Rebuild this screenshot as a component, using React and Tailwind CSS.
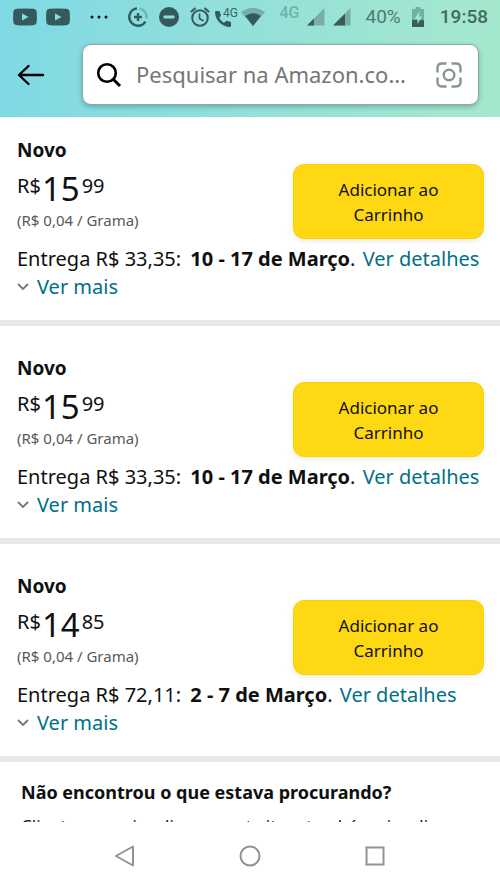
const offers = [
  { id: 1, whole: '15', cents: '99', unit: '(R$ 0,04 / Grama)', shipping: 'R$ 33,35', date: '10 - 17 de Março' },
  { id: 2, whole: '15', cents: '99', unit: '(R$ 0,04 / Grama)', shipping: 'R$ 33,35', date: '10 - 17 de Março' },
  { id: 3, whole: '14', cents: '85', unit: '(R$ 0,04 / Grama)', shipping: 'R$ 72,11', date: '2 - 7 de Março' },
];

function VideoIcon() {
  return (
    <svg className="h-[18px] w-6" viewBox="0 0 24 18">
      <path fill="#345a5e" d="M4 .8Q12 0 20 .8q3.500.3 3.700 3.400.4 4.800 0 9.600-.2 3.100-3.700 3.400-8 .8-16 0-3.500-.3-3.700-3.400-.4-4.800 0-9.600Q.5 1.100 4 .8Z" />
      <path fill="#8adbe0" d="M9 5.500v7l6.500-3.500Z" />
    </svg>
  );
}

function SignalIcon({ level }) {
  return (
    <svg className="h-[18px] w-[18px]" viewBox="0 0 18 18">
      <path fill="#78aea7" d="M0 17.500 17.500 0v17.500Z" />
      <path fill="#3b5d57" d={`M0 17.500 L${level} ${17.5 - level} V17.500Z`} />
    </svg>
  );
}

function StatusBar() {
  return (
    <div className="flex h-[34px] items-center justify-between pl-[13px] pr-3 font-[Roboto,sans-serif] text-[#3e6660]">
      <div className="flex items-center">
        <VideoIcon />
        <span className="w-[9px]" />
        <VideoIcon />
        <svg className="ml-5 h-1 w-[18px]" viewBox="0 0 18 4" fill="#0b1414">
          <circle cx="2" cy="2" r="1.500" />
          <circle cx="9" cy="2" r="1.500" />
          <circle cx="16" cy="2" r="1.500" />
        </svg>
        <svg className="ml-5 h-5 w-5" viewBox="0 0 20 20" fill="none" strokeWidth="2.400">
          <path stroke="#6fb3b3" d="M11.500 1.500a8.700 8.700 0 0 1 7 10" />
          <path stroke="#345a5e" d="M9 1.400a8.700 8.700 0 1 0 8.400 13.200" />
          <path stroke="#345a5e" d="M10 6v8M6 10h8" />
        </svg>
        <svg className="ml-[11px] h-5 w-5" viewBox="0 0 20 20">
          <circle cx="10" cy="10" r="10" fill="#345a5e" />
          <rect x="4.500" y="8.600" width="11" height="2.800" rx="1" fill="#8fdfdc" />
        </svg>
        <svg className="ml-[11px] h-5 w-5" viewBox="0 0 20 20" fill="none" stroke="#345a5e" strokeWidth="2">
          <circle cx="10" cy="11" r="7.800" />
          <path d="M9.500 6.500v5l4 2.500" strokeWidth="1.600" />
          <path d="M.8 5 5.500 1M19.200 5 14.500 1" />
        </svg>
        <div className="relative ml-[5px] h-5 w-[22px]">
          <svg className="h-5 w-5" viewBox="0 0 20 20">
            <path fill="#345a5e" d="M1 4h3.500l1.500 4.500L4.300 11c1.300 2.300 2.500 3.500 4.700 4.700l2.300-2 4.700 1.300V19q0 1-1 1C7 20 0 13 0 5q0-1 1-1Z" />
          </svg>
          <span className="absolute left-2 top-0 text-[12px] leading-[12px]">4G</span>
        </div>
        <svg className="ml-1 h-[18px] w-6" viewBox="0 0 24 18">
          <path fill="#74aeab" d="M0 4Q12-4.500 24 4L12 18Z" />
          <path fill="#345a5e" d="M4.200 8Q12 2.500 19.800 8L12 18Z" />
        </svg>
      </div>
      <div className="flex items-center">
        <span className="mb-2 text-[16px] font-medium leading-4 text-[#6cb3a9]">4G</span>
        <span className="w-[7px]" />
        <SignalIcon level={7} />
        <span className="w-2" />
        <SignalIcon level={12} />
        <span className="ml-[15px] text-[19px] text-[#4d7a71]">40%</span>
        <svg className="ml-[11px] h-5 w-3" viewBox="0 0 12 20">
          <path fill="#74aea1" d="M3.500 0h5v2H12v18H0V2h3.500Z" />
          <path fill="#3b5d57" d="M0 13h12v7H0Z" />
          <path fill="#a1e5d1" d="M7.500 4 2.500 12h3v5l4.500-7.500H7Z" />
        </svg>
        <span className="ml-4 text-[19px] font-medium text-[#44695f]">19:58</span>
      </div>
    </div>
  );
}

function SearchHeader() {
  return (
    <header className="bg-linear-to-r from-[#7fd9e4] to-[#a6e8cd]">
      <StatusBar />
      <div className="flex items-center pb-3 pl-[17px] pr-[21px] pt-[10px]">
        <button type="button" aria-label="Voltar">
          <svg className="h-6 w-7" viewBox="0 0 28 24" fill="none" stroke="#000" strokeWidth="2.400" strokeLinecap="round" strokeLinejoin="round">
            <path d="M26 12H2M11.500 3l-9.500 9 9.500 9" />
          </svg>
        </button>
        <label className="ml-[37px] flex h-[61px] min-w-0 flex-1 items-center rounded-[9px] border border-[#8fa9ab] bg-white pl-[13px] pr-4 shadow-[0_2px_5px_rgba(0,60,60,0.3)]">
          <svg className="h-[26px] w-[26px] shrink-0" viewBox="0 0 26 26" fill="none" stroke="#000" strokeWidth="2.600">
            <circle cx="11" cy="11" r="8.800" />
            <path d="m17.500 17.500 6.500 6.500" strokeWidth="3" />
          </svg>
          <input
            type="text"
            aria-label="Pesquisar"
            placeholder="Pesquisar na Amazon.co…"
            className="ml-[14px] min-w-0 flex-1 bg-transparent text-[22px] outline-none placeholder:text-[#767676]"
          />
          <svg className="h-[26px] w-[26px] shrink-0" viewBox="0 0 26 26" fill="none" stroke="#879596" strokeWidth="2.400">
            <path d="M1.500 10.500V6q0-4.500 4.500-4.500h4.500M15.500 1.500H20q4.500 0 4.500 4.500v4.500M24.500 15.500V20q0 4.500-4.500 4.500h-4.500M10.500 24.500H6q-4.500 0-4.500-4.500v-4.500" />
            <circle cx="13" cy="13" r="5.300" />
          </svg>
        </label>
      </div>
    </header>
  );
}

function Offer({ offer }) {
  return (
    <section className="border-b-[6px] border-[#e7e7e7] pb-[19px] pl-[17px] pr-4 pt-7 first:pt-[19px]">
      <div className="flex items-start justify-between">
        <div>
          <h2 className="text-[19px] font-bold leading-7">Novo</h2>
          <p className="mt-1 flex items-start">
            <span className="mr-px pt-1 text-[20px] leading-7">R$</span>
            <span className="mr-0.5 text-[33px] leading-[42px]">{offer.whole}</span>
            <span className="pt-1 text-[20px] leading-7">{offer.cents}</span>
          </p>
          <p className="text-[15px] leading-5 text-[#565959]">{offer.unit}</p>
        </div>
        <button
          type="button"
          className="mt-7 h-[75px] w-[191px] rounded-[11px] border border-[#fcd200] bg-[#ffd814] px-8 text-[17px] leading-[25px] shadow-[0_2px_5px_rgba(213,217,217,0.5)]"
        >
          Adicionar ao Carrinho
        </button>
      </div>
      <p className="mt-1.5 text-[20px] leading-7">
        Entrega {offer.shipping}: <b className="ml-1">{offer.date}</b>.{' '}
        <a href="#detalhes" className="ml-0.5 text-[#007185]">Ver detalhes</a>
      </p>
      <button type="button" className="flex items-center text-[20px] leading-7 text-[#007185]">
        <svg className="mr-2 h-2 w-3" viewBox="0 0 12 8" fill="none" stroke="#767676" strokeWidth="1.800">
          <path d="m1 1 5 5 5-5" />
        </svg>
        Ver mais
      </button>
    </section>
  );
}

function NavBar() {
  return (
    <nav className="flex h-[67px] shrink-0 items-center justify-center gap-[103px] bg-white">
      <button type="button" aria-label="Voltar">
        <svg className="h-[22px] w-[22px]" viewBox="0 0 22 22" fill="none" stroke="#929292" strokeWidth="2" strokeLinejoin="round">
          <path d="M19 1.500v19L2 11Z" />
        </svg>
      </button>
      <button type="button" aria-label="Início">
        <svg className="h-[22px] w-[22px]" viewBox="0 0 22 22" fill="none" stroke="#929292" strokeWidth="2">
          <circle cx="11" cy="11" r="9.500" />
        </svg>
      </button>
      <button type="button" aria-label="Recentes">
        <svg className="h-[22px] w-[22px]" viewBox="0 0 22 22" fill="none" stroke="#929292" strokeWidth="2">
          <rect x="2.500" y="2.500" width="17" height="17" />
        </svg>
      </button>
    </nav>
  );
}

export default function App() {
  return (
    <div className="flex h-screen flex-col bg-white font-['Noto_Sans',sans-serif] text-[#0f1111]">
      <SearchHeader />
      <main className="min-h-0 flex-1 overflow-hidden">
        {offers.map((offer) => (
          <Offer key={offer.id} offer={offer} />
        ))}
        <section className="pl-[21px] pt-4">
          <h2 className="text-[18px] font-bold leading-7">Não encontrou o que estava procurando?</h2>
          <p className="mt-2 whitespace-nowrap text-[17px] leading-6">Clientes que visualizaram este item também visualizaram</p>
        </section>
      </main>
      <NavBar />
    </div>
  );
}
